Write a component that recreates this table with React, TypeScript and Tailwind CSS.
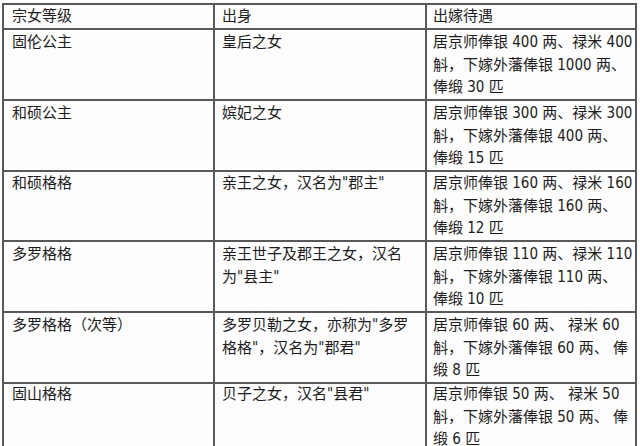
import React from "react";

type Row = { h: string; a: React.ReactNode; b: React.ReactNode; c: React.ReactNode };

const rows: Row[] = [
  {
    h: "h-[71px]",
    a: "固伦公主",
    b: "皇后之女",
    c: (
      <>
        居京师俸银 400 两、禄米 400
        <br />
        斛，下嫁外藩俸银 1000 两、
        <br />
        俸缎 30 匹
      </>
    ),
  },
  {
    h: "h-[70px]",
    a: "和硕公主",
    b: "嫔妃之女",
    c: (
      <>
        居京师俸银 300 两、禄米 300
        <br />
        斛，下嫁外藩俸银 400 两、
        <br />
        俸缎 15 匹
      </>
    ),
  },
  {
    h: "h-[71px]",
    a: "和硕格格",
    b: '亲王之女，汉名为"郡主"',
    c: (
      <>
        居京师俸银 160 两、禄米 160
        <br />
        斛，下嫁外藩俸银 160 两、
        <br />
        俸缎 12 匹
      </>
    ),
  },
  {
    h: "h-[71px]",
    a: "多罗格格",
    b: (
      <>
        亲王世子及郡王之女，汉名
        <br />
        为"县主"
      </>
    ),
    c: (
      <>
        居京师俸银 110 两、禄米 110
        <br />
        斛，下嫁外藩俸银 110 两、
        <br />
        俸缎 10 匹
      </>
    ),
  },
  {
    h: "h-[69px]",
    a: "多罗格格（次等）",
    b: (
      <>
        多罗贝勒之女，亦称为"多罗
        <br />
        格格"，汉名为"郡君"
      </>
    ),
    c: (
      <>
        居京师俸银 60 两、 禄米 60
        <br />
        斛，下嫁外藩俸银 60 两、 俸
        <br />
        缎 8 匹
      </>
    ),
  },
  {
    h: "h-[72px]",
    a: "固山格格",
    b: '贝子之女，汉名"县君"',
    c: (
      <>
        居京师俸银 50 两、 禄米 50
        <br />
        斛，下嫁外藩俸银 50 两、 俸
        <br />
        缎 6 匹
      </>
    ),
  },
];

const cellBase =
  "border-r-2 border-b-2 border-[#595959] whitespace-nowrap overflow-visible";

export default function App() {
  return (
    <div
      className="w-[640px] h-[446px] overflow-hidden bg-[#fdfdfe] text-[15px] leading-[22.5px] text-[#1c1c1c]"
      style={{ fontFamily: '"DejaVu Sans Condensed", "DejaVu Sans", "Noto Sans CJK SC", sans-serif' }}
    >
      <div className="pt-[3px] pl-[2px]">
        <div className="w-[635px] border-t-2 border-l-2 border-[#595959]">
          <div className="grid grid-cols-[211px_212px_210px] h-[24px]">
            <div className={`${cellBase} pl-[8px]`}>宗女等级</div>
            <div className={`${cellBase} pl-[7px]`}>出身</div>
            <div className={`${cellBase} pl-[6px]`}>出嫁待遇</div>
          </div>
          {rows.map((r, i) => (
            <div key={i} className={`grid grid-cols-[211px_212px_210px] ${r.h}`}>
              <div className={`${cellBase} pl-[8px] pt-[2px]`}>{r.a}</div>
              <div className={`${cellBase} pl-[7px] pt-[2px]`}>{r.b}</div>
              <div className={`${cellBase} pl-[6px] pt-[2px]`}>{r.c}</div>
            </div>
          ))}
        </div>
      </div>
    </div>
  );
}
